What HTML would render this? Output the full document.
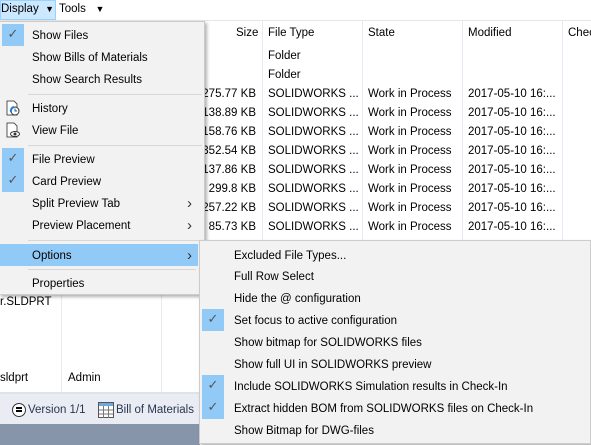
<!DOCTYPE html>
<html><head><style>
*{margin:0;padding:0;box-sizing:border-box}
body{width:591px;height:445px;overflow:hidden;background:#fff;font-family:"Liberation Sans",sans-serif;font-size:11.5px;color:#000;position:relative}
.a{position:absolute;white-space:nowrap}
.vl{position:absolute;width:1px;background:#e5ebf2}
.menu{position:absolute;background:#f2f2f2;border:1px solid #ccc;box-shadow:2px 2px 3px rgba(0,0,0,.3)}
.it{position:absolute;left:0;right:0;height:22px;line-height:22px}
.it span{position:absolute;top:1px}
.chk{position:absolute;left:2px;top:0;width:22px;height:22px;background:#91c9f7;color:#555;text-align:center;font-size:13px;font-family:"DejaVu Sans",sans-serif}
.sep{position:absolute;height:1px;background:#d7d7d7}
.arr{position:absolute;right:12px;color:#333;font-size:15px}
</style></head><body>
<div class="a" style="left:0;top:0;width:56px;height:20px;background:#cce8ff;border:1px solid #99d1ff"></div>
<div class="a" style="left:1px;top:3px">Display&nbsp;&nbsp;<span style="font-size:9px">▼</span></div>
<div class="a" style="left:59px;top:3px">Tools&nbsp;&nbsp;&nbsp;<span style="font-size:9px">▼</span></div>
<div class="a" style="left:0;top:20px;width:591px;height:1px;background:#e5e5e5"></div>
<div class="vl" style="left:262px;top:21px;height:220px"></div>
<div class="vl" style="left:362px;top:21px;height:220px"></div>
<div class="vl" style="left:462px;top:21px;height:220px"></div>
<div class="vl" style="left:562px;top:21px;height:220px"></div>
<div class="a" style="left:236px;top:27px">Size</div>
<div class="a" style="left:268px;top:27px">File Type</div>
<div class="a" style="left:368px;top:27px">State</div>
<div class="a" style="left:468px;top:27px">Modified</div>
<div class="a" style="left:568px;top:27px">Chec</div>
<div class="a" style="left:268px;top:47px;line-height:19px">Folder<br>Folder<br>SOLIDWORKS ...<br>SOLIDWORKS ...<br>SOLIDWORKS ...<br>SOLIDWORKS ...<br>SOLIDWORKS ...<br>SOLIDWORKS ...<br>SOLIDWORKS ...<br>SOLIDWORKS ...</div>
<div class="a" style="left:200px;width:56px;text-align:right;top:85px;line-height:19px">275.77 KB<br>138.89 KB<br>158.76 KB<br>352.54 KB<br>137.86 KB<br>299.8 KB<br>257.22 KB<br>85.73 KB</div>
<div class="a" style="left:368px;top:85px;line-height:19px">Work in Process<br>Work in Process<br>Work in Process<br>Work in Process<br>Work in Process<br>Work in Process<br>Work in Process<br>Work in Process</div>
<div class="a" style="left:468px;top:85px;line-height:19px">2017-05-10 16:...<br>2017-05-10 16:...<br>2017-05-10 16:...<br>2017-05-10 16:...<br>2017-05-10 16:...<br>2017-05-10 16:...<br>2017-05-10 16:...<br>2017-05-10 16:...</div>
<div class="vl" style="left:61px;top:292px;height:100px"></div>
<div class="vl" style="left:161px;top:292px;height:100px"></div>
<div class="a" style="left:0;top:296px">r.SLDPRT</div>
<div class="a" style="left:0;top:372px">sldprt</div>
<div class="a" style="left:68px;top:372px">Admin</div>
<div class="a" style="left:0;top:392px;width:200px;height:2px;background:#dde3ea"></div>
<div class="a" style="left:0;top:394px;width:200px;height:30px;background:#e9edf3"></div>
<div class="a" style="left:0;top:424px;width:200px;height:21px;background:#8795ab"></div>
<div class="a" style="left:12px;top:403px;width:14px;height:14px;border:1.5px solid #333;border-radius:50%;background:#fff"><div style="position:absolute;left:3px;top:3px;width:6px;height:1.5px;background:#000"></div><div style="position:absolute;left:3px;top:6px;width:6px;height:1.5px;background:#000"></div></div>
<div class="a" style="left:28px;top:404px;color:#2a3550">Version 1/1</div>
<svg class="a" style="left:98px;top:402px" width="16" height="16"><rect x="0.5" y="0.5" width="15" height="15" fill="#fff" stroke="#555"/><rect x="1" y="1" width="14" height="3" fill="#6fa8dc"/><path d="M1 8h14M1 12h14M5.5 4v12M10.5 4v12" stroke="#777"/></svg>
<div class="a" style="left:116px;top:404px;color:#2a3550">Bill of Materials</div>
<div class="menu" style="left:-1px;top:21px;width:206px;height:274px">
 <div class="it" style="top:2px"><div class="chk">✓</div><span style="left:32px">Show Files</span></div>
 <div class="it" style="top:24px"><span style="left:32px">Show Bills of Materials</span></div>
 <div class="it" style="top:46px"><span style="left:32px">Show Search Results</span></div>
 <div class="sep" style="left:28px;right:2px;top:72px"></div>
 <div class="it" style="top:75px"><svg style="position:absolute;left:4px;top:3px" width="16" height="16"><path d="M3 1h7l3 3v11H3z" fill="#fff" stroke="#555"/><circle cx="11" cy="11" r="4" fill="#fff" stroke="#333"/><path d="M11 8.5v2.5h2" stroke="#1b5fa8" fill="none"/><path d="M7 12a4 4 0 0 1 3-5" stroke="#1b7bd0" stroke-width="2" fill="none"/></svg><span style="left:32px">History</span></div>
 <div class="it" style="top:97px"><svg style="position:absolute;left:4px;top:3px" width="16" height="16"><path d="M3 1h7l3 3v11H3z" fill="#fff" stroke="#555"/><ellipse cx="11" cy="12" rx="4.5" ry="2.5" fill="#fff" stroke="#333"/><circle cx="11" cy="12" r="1.5" fill="#333"/></svg><span style="left:32px">View File</span></div>
 <div class="sep" style="left:28px;right:2px;top:123px"></div>
 <div class="it" style="top:126px"><div class="chk">✓</div><span style="left:32px">File Preview</span></div>
 <div class="it" style="top:148px"><div class="chk">✓</div><span style="left:32px">Card Preview</span></div>
 <div class="it" style="top:170px"><span style="left:32px">Split Preview Tab</span><span class="arr">›</span></div>
 <div class="it" style="top:192px"><span style="left:32px">Preview Placement</span><span class="arr">›</span></div>
 <div class="sep" style="left:28px;right:2px;top:218px"></div>
 <div class="it" style="top:222px;right:6px;background:#91c9f7"><span style="left:32px">Options</span><span class="arr" style="right:6px">›</span></div>
 <div class="sep" style="left:28px;right:8px;top:247px"></div>
 <div class="it" style="top:250px"><span style="left:32px">Properties</span></div>
</div>
<div class="menu" style="left:199px;top:240px;width:392px;height:204px">
 <div class="it" style="top:3px"><span style="left:34px">Excluded File Types...</span></div>
 <div class="it" style="top:24px"><span style="left:34px">Full Row Select</span></div>
 <div class="it" style="top:46px"><span style="left:34px">Hide the @ configuration</span></div>
 <div class="it" style="top:68px"><div class="chk">✓</div><span style="left:34px">Set focus to active configuration</span></div>
 <div class="it" style="top:90px"><span style="left:34px">Show bitmap for SOLIDWORKS files</span></div>
 <div class="it" style="top:112px"><span style="left:34px">Show full UI in SOLIDWORKS preview</span></div>
 <div class="it" style="top:134px"><div class="chk">✓</div><span style="left:34px">Include SOLIDWORKS Simulation results in Check-In</span></div>
 <div class="it" style="top:156px"><div class="chk">✓</div><span style="left:34px">Extract hidden BOM from SOLIDWORKS files on Check-In</span></div>
 <div class="it" style="top:178px"><span style="left:34px">Show Bitmap for DWG-files</span></div>
</div>
</body></html>
